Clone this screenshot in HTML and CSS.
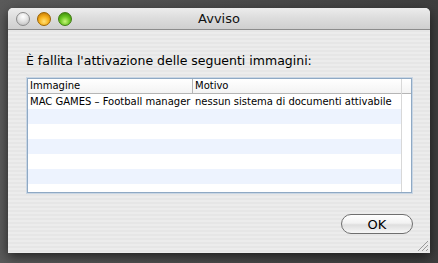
FILE: index.html
```html
<!DOCTYPE html>
<html lang="it">
<head>
    <meta charset="UTF-8">
    <title>Avviso</title>
    <link rel="stylesheet" href="styles.css">
</head>
<body>
    <div class="window">
        <div class="titlebar">
            <div class="lights">
                <span class="light close"></span>
                <span class="light minimize"></span>
                <span class="light zoom"></span>
            </div>
            <div class="title">Avviso</div>
        </div>

        <div class="content">
            <p class="message">È fallita l'attivazione delle seguenti immagini:</p>

            <div class="table-frame">
                <div class="table-body">
                    <div class="row header">
                        <div class="cell col-image">Immagine</div>
                        <div class="cell col-reason">Motivo</div>
                    </div>
                    <div class="row">
                        <div class="cell col-image">MAC GAMES – Football manager</div>
                        <div class="cell col-reason">nessun sistema di documenti attivabile</div>
                    </div>
                    <div class="row stripe"></div>
                    <div class="row"></div>
                    <div class="row stripe"></div>
                    <div class="row"></div>
                    <div class="row stripe"></div>
                    <div class="row"></div>
                </div>
                <div class="scroll-column">
                    <div class="corner"></div>
                </div>
            </div>

            <div class="actions">
                <button type="button" class="ok-btn">OK</button>
            </div>
        </div>

        <div class="grip"></div>
    </div>
</body>
</html>
```

FILE: styles.css
```css
* {
    margin: 0;
    padding: 0;
    box-sizing: border-box;
}

body {
    width: 438px;
    height: 263px;
    overflow: hidden;
    background: linear-gradient(90deg, #5a5a5a 0%, #4c4c4c 50%, #3e3e3e 100%);
    font-family: "DejaVu Sans", "Liberation Sans", sans-serif;
    color: #000;
    padding: 8px 8px 0 8px;
}

.window {
    position: relative;
    width: 422px;
    height: 245px;
    border-radius: 5px 5px 0 0;
    overflow: hidden;
    background: repeating-linear-gradient(180deg, #ececec 0, #ececec 2px, #e6e6e6 2px, #e6e6e6 4px);
    box-shadow: 0 4px 12px rgba(0, 0, 0, 0.6);
}

.titlebar {
    display: flex;
    align-items: center;
    height: 22px;
    background: linear-gradient(180deg, #ececec 0%, #dcdcdc 50%, #cfcfcf 100%);
    border-bottom: 1px solid #8c8c8c;
    position: relative;
}

.lights {
    display: flex;
    gap: 7px;
    padding-left: 8px;
}

.light {
    width: 14px;
    height: 14px;
    border-radius: 50%;
    border: 1px solid #8a8a8a;
}

.light.close {
    background: radial-gradient(circle at 50% 30%, #ffffff 0%, #e4e4e4 45%, #b8b8b8 100%);
}

.light.minimize {
    background: radial-gradient(circle at 50% 70%, #ffe27a 0%, #f7b21e 45%, #b86c00 100%);
    border-color: #9a6200;
}

.light.zoom {
    background: radial-gradient(circle at 50% 70%, #c8f57a 0%, #6ac623 45%, #2f7a00 100%);
    border-color: #3f7a12;
}

.title {
    position: absolute;
    left: 0;
    right: 0;
    top: 3px;
    text-align: center;
    font-size: 13px;
    color: #111;
}

.content {
    padding: 23px 17px 0 18px;
}

.message {
    font-size: 12.5px;
    line-height: 16px;
    margin-bottom: 9px;
}

.table-frame {
    display: flex;
    margin-left: 1px;
    width: 385px;
    height: 115px;
    border: 1px solid #8fa9c4;
    box-shadow: 0 0 0 1px #c9d6e4;
    background: #fff;
}

.table-body {
    flex: 1;
    overflow: hidden;
}

.row {
    display: flex;
    height: 15px;
}

.row.stripe {
    background: #edf3fe;
}

.row.header {
    height: 15px;
    border-bottom: 1px solid #b5b5b5;
    background: linear-gradient(180deg, #ffffff 0%, #f3f3f3 100%);
}

.cell {
    font-size: 10px;
    line-height: 15px;
    padding-left: 2px;
    white-space: nowrap;
    overflow: hidden;
}

.header .cell {
    line-height: 14px;
}

.col-image {
    width: 165px;
}

.header .col-image {
    border-right: 1px solid #b5b5b5;
}

.col-reason {
    flex: 1;
}

.scroll-column {
    width: 10px;
    border-left: 1px solid #d8d8d8;
    background: #fff;
}

.corner {
    height: 15px;
    border-bottom: 1px solid #b5b5b5;
    background: linear-gradient(180deg, #ffffff 0%, #f3f3f3 100%);
}

.actions {
    display: flex;
    justify-content: flex-end;
    padding-top: 21px;
}

.ok-btn {
    width: 72px;
    height: 20px;
    border-radius: 10px;
    border: 1px solid #6f6f6f;
    background: linear-gradient(180deg, #ffffff 0%, #f2f2f2 45%, #dedede 55%, #f7f7f7 100%);
    font-family: "DejaVu Sans", "Liberation Sans", sans-serif;
    font-size: 13px;
    color: #000;
}

.grip {
    position: absolute;
    right: 2px;
    bottom: 2px;
    width: 10px;
    height: 10px;
    background: linear-gradient(135deg, transparent 45%, #9a9a9a 45%, #9a9a9a 52%, transparent 52%, transparent 65%, #9a9a9a 65%, #9a9a9a 72%, transparent 72%, transparent 85%, #9a9a9a 85%, #9a9a9a 92%, transparent 92%);
}
```
